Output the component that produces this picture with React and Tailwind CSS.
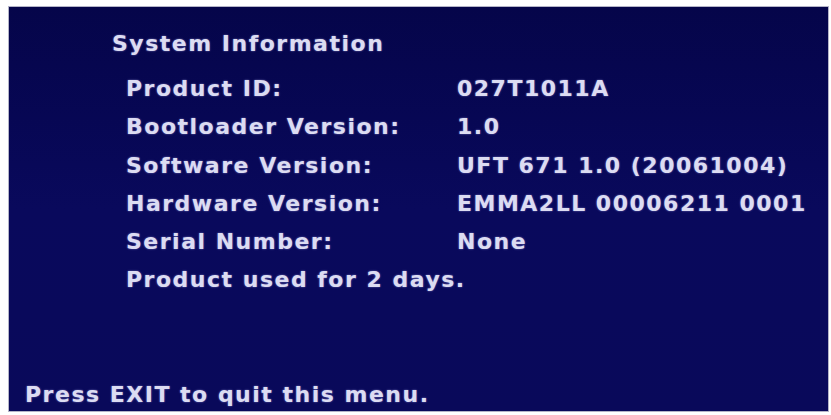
import React from 'react';

// Set-top box "System Information" OSD screen.
const rows = [
  ['Product ID:', '027T1011A'],
  ['Bootloader Version:', '1.0'],
  ['Software Version:', 'UFT 671 1.0 (20061004)'],
  ['Hardware Version:', 'EMMA2LL 00006211 0001'],
  ['Serial Number:', 'None'],
];

export default function App() {
  return (
    <div className="w-[831px] h-[415px] bg-white pt-[6px] pl-[8px] pr-[2px] pb-[3px]">
      <div
        className="h-full flex flex-col border border-[#b4b4c8] bg-gradient-to-b from-[#05054a] via-[#09095c] to-[#09095a] text-[#dcdcf2] font-bold text-[22px] tracking-[1.5px] pt-[18px] pb-[1px] [text-shadow:0_0_2px_rgba(190,190,255,0.6)]"
        style={{ fontFamily: '"DejaVu Sans", Verdana, sans-serif' }}
      >
        <div className="leading-[38px] pl-[103px]">System Information</div>
        <div className="mt-[7px] pl-[117px]">
          {rows.map(([label, value]) => (
            <div key={label} className="flex leading-[38.3px]">
              <span className="w-[331px] shrink-0">{label}</span>
              <span>{value}</span>
            </div>
          ))}
          <div className="leading-[38.3px]">Product used for 2 days.</div>
        </div>
        <div className="mt-auto leading-[30px] pl-[16px]">Press EXIT to quit this menu.</div>
      </div>
    </div>
  );
}
